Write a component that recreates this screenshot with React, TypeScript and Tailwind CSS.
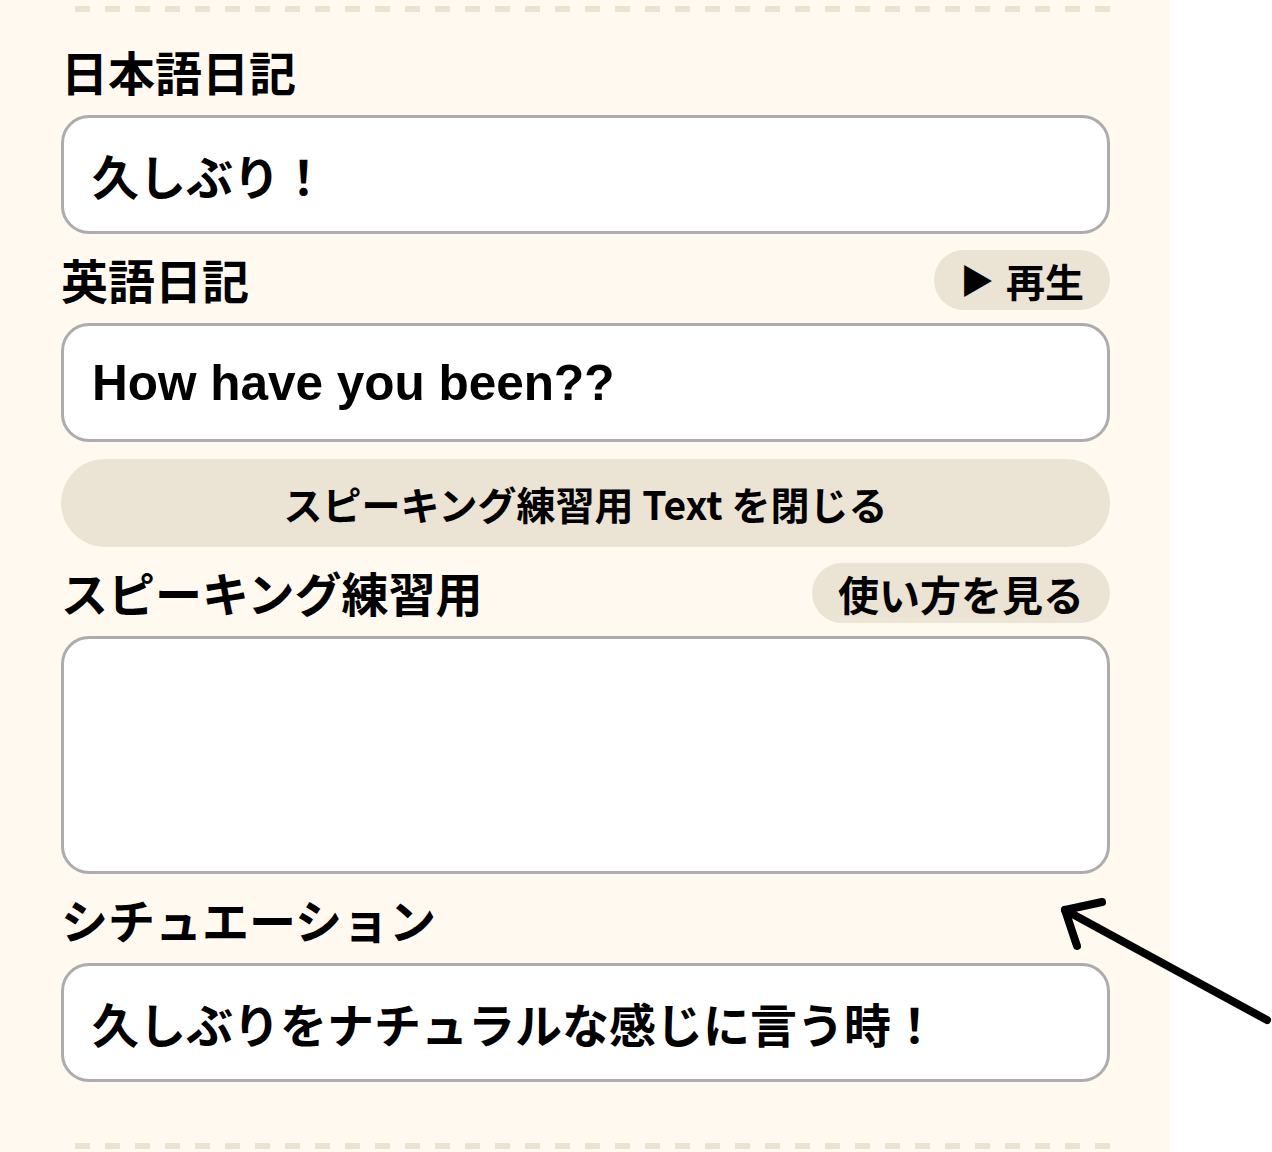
import type { ReactNode } from "react";

const jp = "font-['Noto_Sans_CJK_JP',sans-serif]";

function DashedLine() {
  return (
    <div className="ml-[75px] mr-[60px] h-[6px] bg-[repeating-linear-gradient(to_right,#ebe2d1_0px,#ebe2d1_15px,transparent_15px,transparent_30px)]" />
  );
}

function LabelRow({ label, action }: { label: string; action?: ReactNode }) {
  return (
    <div className="flex h-[60px] items-center justify-between">
      <h2 className="-mt-[3px] text-[47px] font-bold leading-none text-black">{label}</h2>
      {action}
    </div>
  );
}

function Pill({ children, size = "text-[39px]" }: { children: ReactNode; size?: string }) {
  return (
    <button
      type="button"
      className={`flex h-[60px] items-center gap-3 rounded-full bg-[#ebe3d3] px-[26px] font-bold leading-none text-black ${size}`}
    >
      {children}
    </button>
  );
}

function Field({ children, english = false }: { children: ReactNode; english?: boolean }) {
  return (
    <div
      className={`flex h-[119px] items-center rounded-[28px] border-[3px] border-[#acacac] bg-white px-[28px] font-bold leading-none text-black ${
        english ? "font-['Liberation_Sans','Noto_Sans_CJK_JP',sans-serif] text-[49.5px]" : "text-[47px]"
      }`}
    >
      {children}
    </div>
  );
}

export default function App() {
  return (
    <div className={`relative flex h-[1152px] w-[1272px] overflow-hidden bg-white ${jp}`}>
      <section className="flex w-[1170px] flex-col bg-[#fff9f0] pt-[6px]">
        <DashedLine />

        <div className="mt-[30px] flex flex-col pl-[61px] pr-[60px]">
          <LabelRow label="日本語日記" />
          <div className="mt-[13px]">
            <Field>久しぶり！</Field>
          </div>

          <div className="mt-[16px]">
            <LabelRow
              label="英語日記"
              action={
                <Pill>
                  <span className="text-[34px]">▶</span>
                  <span>再生</span>
                </Pill>
              }
            />
          </div>
          <div className="mt-[13px]">
            <Field english>How have you been??</Field>
          </div>

          <button
            type="button"
            className="mt-[17px] flex h-[88px] items-center justify-center rounded-full bg-[#ebe3d3] text-[39px] font-bold leading-none text-black"
          >
            スピーキング練習用 Text を閉じる
          </button>

          <div className="mt-[16px]">
            <LabelRow
              label="スピーキング練習用"
              action={<Pill size="text-[41px]">使い方を見る</Pill>}
            />
          </div>
          <textarea
            readOnly
            className="mt-[13px] h-[238px] resize-none rounded-[28px] border-[3px] border-[#acacac] bg-white px-[28px] py-[20px] text-[47px] outline-none"
          />

          <div className="mt-[16px]">
            <LabelRow label="シチュエーション" />
          </div>
          <div className="mt-[13px]">
            <Field>久しぶりをナチュラルな感じに言う時！</Field>
          </div>
        </div>

        <div className="mt-[61px]">
          <DashedLine />
        </div>
      </section>

      <svg
        className="pointer-events-none absolute left-0 top-0 h-[1152px] w-[1272px]"
        viewBox="0 0 1272 1152"
        fill="none"
        stroke="black"
        strokeWidth="8"
        strokeLinecap="round"
        strokeLinejoin="round"
      >
        <path d="M1267 1020 L1065 910" />
        <path d="M1102 902 L1065 910 L1077 946" />
      </svg>
    </div>
  );
}
